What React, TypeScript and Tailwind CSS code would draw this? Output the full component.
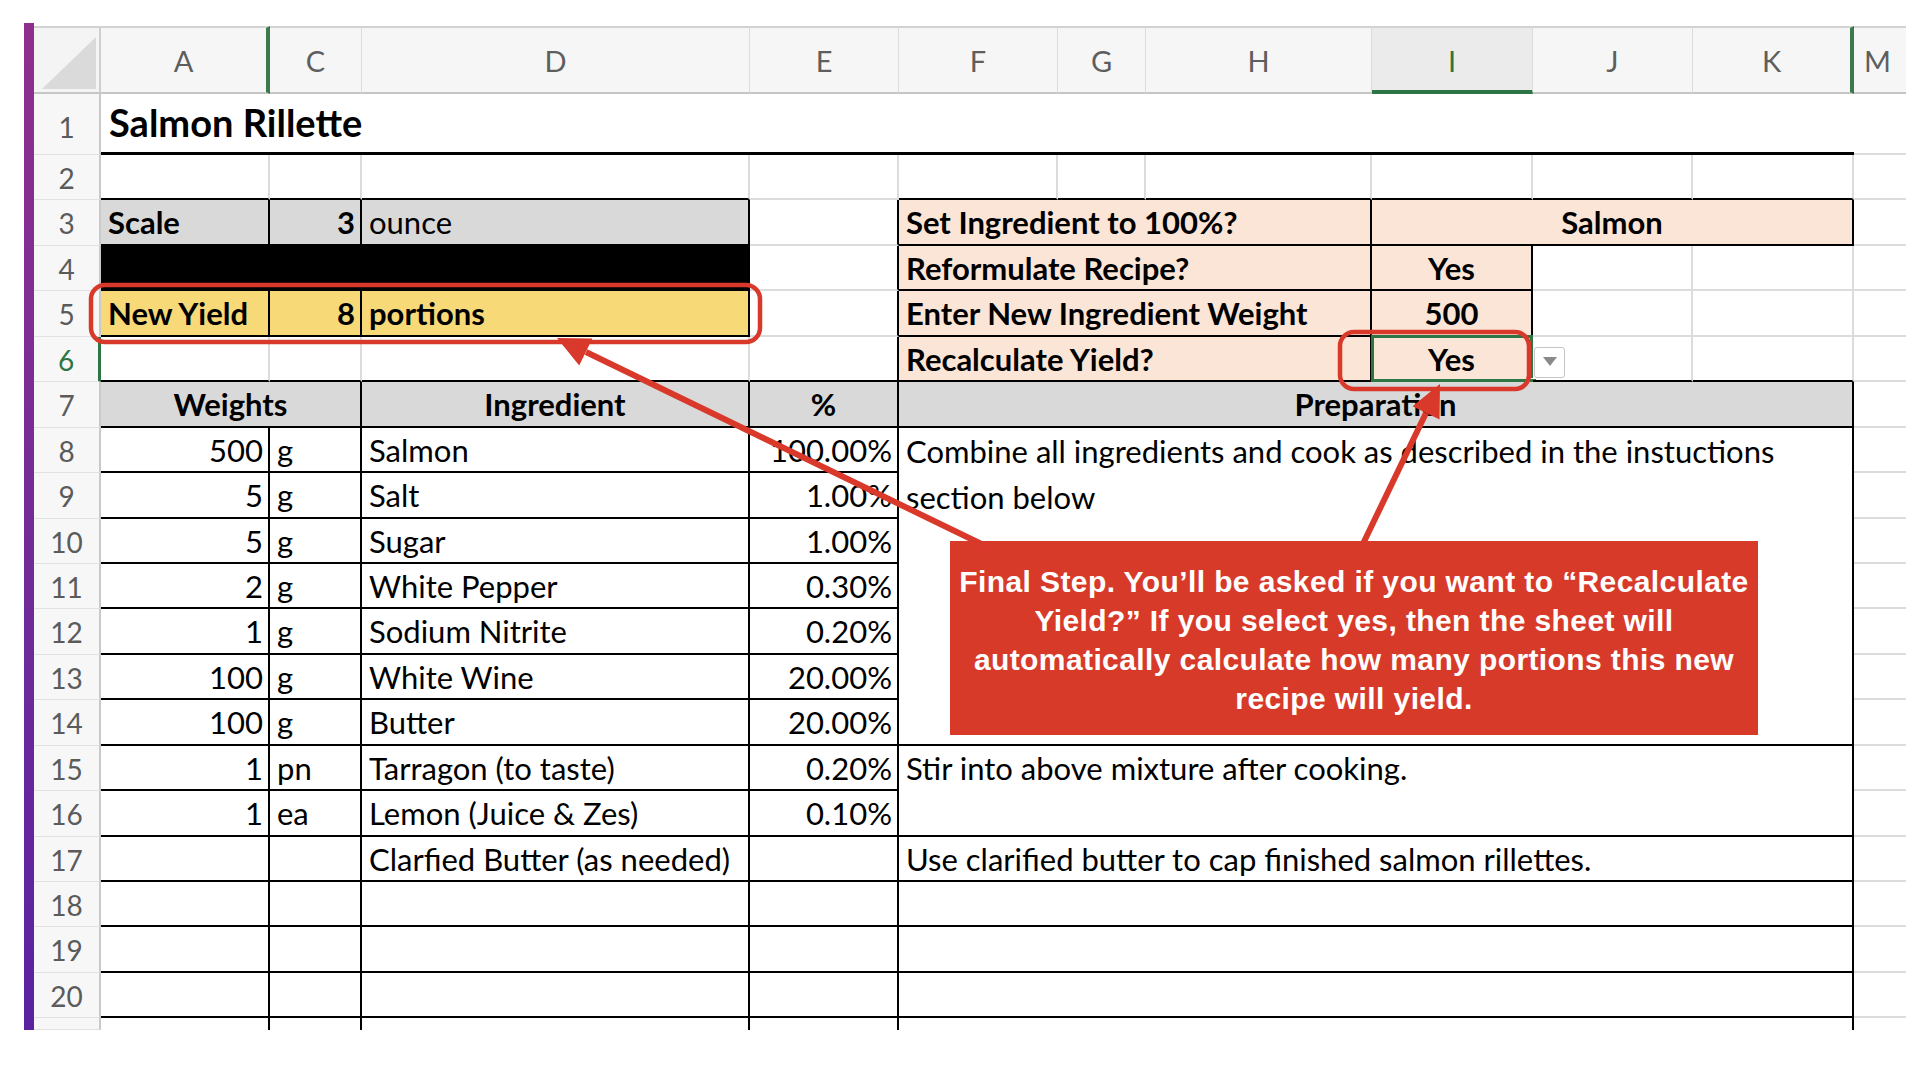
import React from 'react';

const rg = 'border-r-2 border-r-[#dcdcdc]';
const rk = 'border-r-2 border-r-black';
const bgl = 'border-b-2 border-b-[#dcdcdc]';
const bk = 'border-b-2 border-b-black';

const GRAY = 'bg-[#d9d9d9]';
const PEACH = 'bg-[#fbe5d6]';
const YEL = 'bg-[#f8d978]';

function C({ cls = '', children }: { cls?: string; children?: React.ReactNode }) {
  return (
    <div className={`relative min-w-0 whitespace-nowrap px-[7px] text-[31px] leading-[45px] text-black ${cls}`}>
      {children}
    </div>
  );
}

function RH({ n, green = false, tall = false }: { n?: number; green?: boolean; tall?: boolean }) {
  const border = green ? 'border-r-[3px] border-r-[#2e7545] text-[#2e7545]' : 'border-r-2 border-r-[#c9c9c9] text-[#5b5b5b]';
  const lead = tall ? 'leading-[66px]' : 'leading-[47px]';
  return (
    <div className={`bg-[#f7f7f7] border-b border-b-[#e2e2e2] text-center text-[28px] ${lead} ${border}`}>{n}</div>
  );
}

function CH({ l, cls = '' }: { l: string; cls?: string }) {
  return (
    <div className={`border-t-2 border-t-[#d2d2d2] text-center text-[29px] leading-[66px] ${cls}`}>{l}</div>
  );
}

const hdrBase = 'bg-[#f6f6f6] border-b-2 border-b-[#c6c6c6] text-[#5e5e5e]';

const data: [string, string, string, string][] = [
  ['500', 'g', 'Salmon', '100.00%'],
  ['5', 'g', 'Salt', '1.00%'],
  ['5', 'g', 'Sugar', '1.00%'],
  ['2', 'g', 'White Pepper', '0.30%'],
  ['1', 'g', 'Sodium Nitrite', '0.20%'],
  ['100', 'g', 'White Wine', '20.00%'],
  ['100', 'g', 'Butter', '20.00%'],
  ['1', 'pn', 'Tarragon (to taste)', '0.20%'],
  ['1', 'ea', 'Lemon (Juice & Zes)', '0.10%'],
  ['', '', 'Clarfied Butter (as needed)', ''],
];

export default function App() {
  const bodyRows: React.ReactNode[] = [];
  data.forEach((d, i) => {
    const r = 8 + i;
    bodyRows.push(<RH key={`rh${r}`} n={r} />);
    bodyRows.push(<C key={`a${r}`} cls={`${rk} ${bk} text-right pr-[5px]`}>{d[0]}</C>);
    bodyRows.push(<C key={`c${r}`} cls={`${rk} ${bk}`}>{d[1]}</C>);
    bodyRows.push(<C key={`d${r}`} cls={`${rk} ${bk}`}>{d[2]}</C>);
    bodyRows.push(<C key={`e${r}`} cls={`${rk} ${bk} text-right pr-[5px]`}>{d[3]}</C>);
    if (r === 8) {
      bodyRows.push(
        <div key="f8" className={`col-span-6 row-span-7 ${rk} ${bk} px-[7px] text-[31px] leading-[46px] whitespace-nowrap`}>
          Combine all ingredients and cook as described in the instuctions
          <br />
          section below
        </div>
      );
    } else if (r === 15) {
      bodyRows.push(
        <div key="f15" className={`col-span-6 row-span-2 ${rk} ${bk} px-[7px] text-[31px] leading-[45px] whitespace-nowrap`}>
          Stir into above mixture after cooking.
        </div>
      );
    } else if (r === 17) {
      bodyRows.push(
        <C key="f17" cls={`col-span-6 ${rk} ${bk}`}>Use clarified butter to cap finished salmon rillettes.</C>
      );
    }
    bodyRows.push(<div key={`m${r}`} className={bgl} />);
  });
  for (let r = 18; r <= 21; r++) {
    const b = r === 21 ? '' : bk;
    bodyRows.push(<RH key={`rh${r}`} n={r === 21 ? undefined : r} />);
    bodyRows.push(<C key={`a${r}`} cls={`${rk} ${b}`} />);
    bodyRows.push(<C key={`c${r}`} cls={`${rk} ${b}`} />);
    bodyRows.push(<C key={`d${r}`} cls={`${rk} ${b}`} />);
    bodyRows.push(<C key={`e${r}`} cls={`${rk} ${b}`} />);
    bodyRows.push(<C key={`f${r}`} cls={`col-span-6 ${rk} ${b}`} />);
    bodyRows.push(<div key={`m${r}`} className={r === 21 ? '' : bgl} />);
  }

  return (
    <div className="relative w-[1920px] h-[1080px] overflow-hidden bg-white font-[Lato,sans-serif]">
      <div className="flex pt-[26px]">
        <div className="w-[24px] shrink-0" />
        <div className="w-[10px] h-[1007px] -mt-[3px] shrink-0 bg-linear-to-b from-[#8e2f8c] to-[#5a21a0]" />
        <div className="grid grid-cols-[67px_169px_92px_388px_149px_159px_88px_226px_161px_160px_161px_52px] grid-rows-[68px_61px_repeat(19,45.45px)_12px] w-[1872px] h-[1004px]">
          {/* header row */}
          <div className="relative bg-[#f4f4f4] border-t-2 border-t-[#d2d2d2] border-r-2 border-r-[#cfcfcf] border-b-2 border-b-[#c6c6c6]">
            <svg className="absolute left-[8px] top-[9px]" width="54" height="52" viewBox="0 0 54 52">
              <polygon points="0,52 54,52 54,0" fill="#dadada" />
            </svg>
          </div>
          <CH l="A" cls={`${hdrBase} border-r-4 border-r-[#3b7a4c]`} />
          <CH l="C" cls={`${hdrBase} border-r border-r-[#dcdcdc]`} />
          <CH l="D" cls={`${hdrBase} border-r border-r-[#dcdcdc]`} />
          <CH l="E" cls={`${hdrBase} border-r border-r-[#dcdcdc]`} />
          <CH l="F" cls={`${hdrBase} border-r border-r-[#dcdcdc]`} />
          <CH l="G" cls={`${hdrBase} border-r border-r-[#dcdcdc]`} />
          <CH l="H" cls={`${hdrBase} border-r border-r-[#dcdcdc]`} />
          <CH l="I" cls="bg-[#ebebeb] border-b-4 border-b-[#2e7545] text-[#2e7545] border-r border-r-[#dcdcdc]" />
          <CH l="J" cls={`${hdrBase} border-r border-r-[#dcdcdc]`} />
          <CH l="K" cls={`${hdrBase} border-r-4 border-r-[#3b7a4c]`} />
          <CH l="M" cls={`${hdrBase} text-left pl-[10px]`} />

          {/* row 1 */}
          <RH n={1} tall />
          <div className="col-span-10 border-b-[3px] border-b-black pl-[8px] text-[38px] font-bold leading-[57px] whitespace-nowrap">
            Salmon Rillette
          </div>
          <div className={bgl} />

          {/* row 2 */}
          <RH n={2} />
          <C cls={`${rg} ${bk}`} />
          <C cls={`${rg} ${bk}`} />
          <C cls={`${rg} ${bk}`} />
          <C cls={`${rg} ${bgl}`} />
          <C cls={`${rg} ${bk}`} />
          <C cls={`${rg} ${bk}`} />
          <C cls={`${rg} ${bk}`} />
          <C cls={`${rg} ${bk}`} />
          <C cls={`${rg} ${bk}`} />
          <C cls={`${rg} ${bk}`} />
          <div className={bgl} />

          {/* row 3 */}
          <RH n={3} />
          <C cls={`${GRAY} ${rk} ${bk} font-bold`}>Scale</C>
          <C cls={`${GRAY} ${rk} ${bk} font-bold text-right pr-[5px]`}>3</C>
          <C cls={`${GRAY} ${rk} ${bk}`}>ounce</C>
          <C cls={`${rk} ${bgl}`} />
          <C cls={`col-span-3 ${PEACH} ${rk} ${bk} font-bold`}>Set Ingredient to 100%?</C>
          <C cls={`col-span-3 ${PEACH} ${rk} ${bk} font-bold text-center`}>Salmon</C>
          <div className={bgl} />

          {/* row 4 */}
          <RH n={4} />
          <C cls={`col-span-3 bg-black ${rk} ${bk}`} />
          <C cls={`${rk} ${bgl}`} />
          <C cls={`col-span-3 ${PEACH} ${rk} ${bk} font-bold`}>Reformulate Recipe?</C>
          <C cls={`${PEACH} ${rk} ${bk} font-bold text-center`}>Yes</C>
          <C cls={`${rg} ${bgl}`} />
          <C cls={`${rg} ${bgl}`} />
          <div className={bgl} />

          {/* row 5 */}
          <RH n={5} />
          <C cls={`${YEL} ${rk} ${bk} font-bold`}>New Yield</C>
          <C cls={`${YEL} ${rk} ${bk} font-bold text-right pr-[5px]`}>8</C>
          <C cls={`${YEL} ${rk} ${bk} font-bold`}>portions</C>
          <C cls={`${rk} ${bgl}`} />
          <C cls={`col-span-3 ${PEACH} ${rk} ${bk} font-bold`}>Enter New Ingredient Weight</C>
          <C cls={`${PEACH} ${rk} ${bk} font-bold text-center`}>500</C>
          <C cls={`${rg} ${bgl}`} />
          <C cls={`${rg} ${bgl}`} />
          <div className={bgl} />

          {/* row 6 */}
          <RH n={6} green />
          <C cls={`${rg} ${bk}`} />
          <C cls={`${rg} ${bk}`} />
          <C cls={`${rg} ${bk}`} />
          <C cls={`${rk} ${bk}`} />
          <C cls={`col-span-3 ${PEACH} ${rk} ${bk} font-bold`}>Recalculate Yield?</C>
          <C cls={`${PEACH} ${rk} ${bk} font-bold text-center`}>
            Yes
            <div className="absolute -left-[1px] -top-[2px] -right-[2px] -bottom-[2px] border-[3px] border-[#2e7545]" />
            <div className="absolute -right-[6px] -bottom-[6px] w-[8px] h-[8px] bg-[#2e7545] border border-white" />
          </C>
          <C cls={`${rg} ${bk}`}>
            <div className="absolute left-[1px] top-[10px] w-[31px] h-[31px] rounded-[3px] border border-[#c4c4c4] bg-white flex items-center justify-center">
              <svg width="14" height="10" viewBox="0 0 14 10">
                <polygon points="0,0 14,0 7,9" fill="#8a8a8a" />
              </svg>
            </div>
          </C>
          <C cls={`${rg} ${bk}`} />
          <div className={bgl} />

          {/* row 7 */}
          <RH n={7} />
          <C cls={`col-span-2 ${GRAY} ${rk} ${bk} font-bold text-center`}>Weights</C>
          <C cls={`${GRAY} ${rk} ${bk} font-bold text-center`}>Ingredient</C>
          <C cls={`${GRAY} ${rk} ${bk} font-bold text-center`}>%</C>
          <C cls={`col-span-6 ${GRAY} ${rk} ${bk} font-bold text-center`}>Preparation</C>
          <div className={bgl} />

          {bodyRows}
        </div>
      </div>

      {/* callout */}
      <div className="absolute left-[950px] top-[541px] w-[808px] h-[194px] bg-[#d83a2a] pt-[21px] text-center text-white text-[30px] tracking-[0.4px] font-bold leading-[39px] font-['Liberation_Sans',Arial,sans-serif] whitespace-nowrap">
        Final Step. You’ll be asked if you want to “Recalculate
        <br />
        Yield?” If you select yes, then the sheet will
        <br />
        automatically calculate how many portions this new
        <br />
        recipe will yield.
      </div>

      {/* annotations */}
      <svg className="absolute left-0 top-0 pointer-events-none" width="1920" height="1080" viewBox="0 0 1920 1080">
        <rect x="91" y="285" width="669" height="57" rx="14" fill="none" stroke="#d8392b" strokeWidth="4.5" />
        <rect x="1340" y="332" width="189" height="57" rx="14" fill="none" stroke="#d8392b" strokeWidth="4.5" />
        <line x1="1000" y1="553" x2="586" y2="352" stroke="#d8392b" strokeWidth="6" />
        <polygon points="557,338 592.4,338.5 579.2,365.5" fill="#d8392b" />
        <line x1="1360" y1="550" x2="1426" y2="413" stroke="#d8392b" strokeWidth="6" />
        <polygon points="1440,384 1439.5,419.4 1412.5,406.2" fill="#d8392b" />
      </svg>
    </div>
  );
}
